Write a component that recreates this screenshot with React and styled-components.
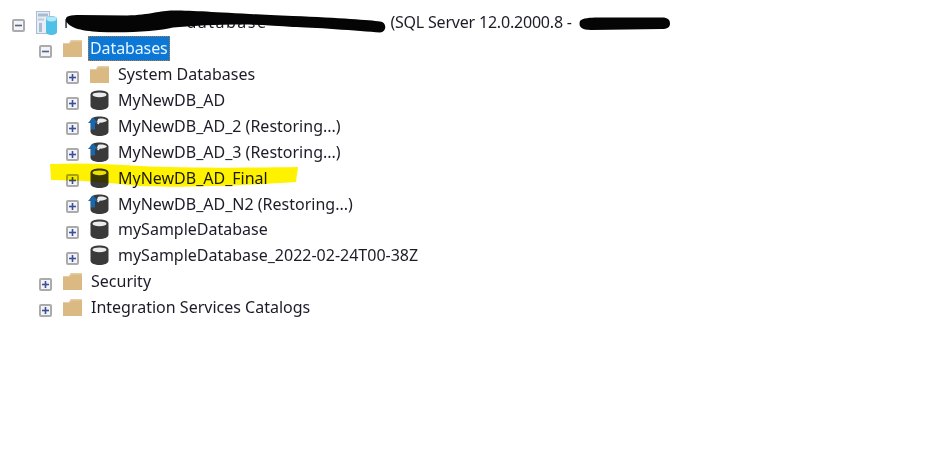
import React from "react";
import styled, { createGlobalStyle } from "styled-components";

const Global = createGlobalStyle`
  html, body { margin: 0; padding: 0; background: #fff; }
  body { width: 940px; height: 454px; overflow: hidden; }
`;

const Page = styled.div`
  width: 940px;
  height: 454px;
  box-sizing: border-box;
  padding-top: 9.4px;
  background: #fff;
  font-family: "Noto Sans", "Open Sans", sans-serif;
  font-size: 16px;
  color: #1c1c28;
  filter: blur(0.35px);
`;

const Tree = styled.div`
  display: flex;
  flex-direction: column;
`;

const Row = styled.div`
  position: relative;
  display: flex;
  align-items: center;
  height: 25.9px;
  padding-left: ${(p) => 12 + p.$depth * 27}px;
  white-space: nowrap;
`;

const ExpanderBox = styled.span`
  position: relative;
  flex: none;
  box-sizing: border-box;
  width: 13px;
  height: 13px;
  margin-top: 6px;
  border: 2px solid #ababab;
  border-radius: 2px;
  background: #f4f4f8;
  display: flex;
  align-items: center;
  justify-content: center;
`;

const IconSlot = styled.span`
  flex: none;
  width: 28px;
  margin-left: 11px;
  height: 24px;
  display: flex;
  align-items: center;
`;

const Label = styled.span`
  position: relative;
  line-height: 22px;
`;

const RootLabel = styled(Label)`
  letter-spacing: -0.2px;
`;

const Selected = styled(Label)`
  margin-left: -3px;
  padding: 0 2px;
  height: 25px;
  line-height: 24px;
  letter-spacing: -0.1px;
  background: #0b78d8;
  color: #eaf4ff;
  outline: 1.5px dotted #c9782a;
  outline-offset: -1px;
`;

const Redacted = styled.span`
  position: relative;
  display: inline-block;
  width: ${(p) => p.$w}px;
  height: 22px;
  vertical-align: top;
`;

const ResidualText = styled.span`
  position: absolute;
  left: 116px;
  top: 0;
  letter-spacing: 1.5px;
`;

const Stroke = styled.svg`
  position: absolute;
  overflow: visible;
`;

const RedactStroke = styled(Stroke)`
  left: 0;
  top: 0;
`;

const Highlight = styled(Stroke)`
  left: 50px;
  top: -1.5px;
  mix-blend-mode: multiply;
`;

const Expander = ({ open }) => (
  <ExpanderBox>
    <svg width="7" height="7" viewBox="0 0 7 7">
      <rect x="0" y="2.7" width="7" height="1.6" fill={open ? "#55617f" : "#3a4f9c"} />
      {!open && <rect x="2.7" y="0" width="1.6" height="7" fill="#3a4f9c" />}
    </svg>
  </ExpanderBox>
);

const FolderIcon = () => (
  <svg width="20" height="17" viewBox="0 0 20 17">
    <path d="M0 3 L0 17 L19 17 L19 0 L8 0 L6 3 Z" fill="#dab983" />
    <path d="M0 3 L6 3 L8 0 L19 0 L19 1.5 L8.6 1.5 L6.6 4 L0 4 Z" fill="#e6cda3" />
  </svg>
);

const DbIcon = () => (
  <svg width="19" height="20" viewBox="0 0 19 20">
    <path d="M0.5 4.5 C0.5 -1 18.5 -1 18.5 4.5 L18.5 15.5 C18.5 21.5 0.5 21.5 0.5 15.5 Z" fill="#3a3a3a" />
    <ellipse cx="9.5" cy="4.8" rx="7" ry="2.4" fill="#ececec" />
  </svg>
);

const RestoringIcon = () => (
  <svg width="21" height="20" viewBox="0 0 21 20" style={{ marginLeft: -2 }}>
    <path d="M2.5 4.5 C2.5 -1 20.5 -1 20.5 4.5 L20.5 15.5 C20.5 21.5 2.5 21.5 2.5 15.5 Z" fill="#3a3a3a" />
    <path d="M10 3 C13 2.2 17 2.6 19 4.6 C17.5 6.2 14 6.8 12 6.6 L10.5 8.5 L8.6 7 Z" fill="#ececec" />
    <path d="M5 1.5 L0 7 L3 7 L3 13.5 L7 13.5 L7 7 L10 7 Z" fill="#1567ae" />
  </svg>
);

const ServerIcon = () => (
  <svg width="21" height="24" viewBox="0 0 21 24" style={{ marginTop: 2 }}>
    <rect x="0.5" y="0.5" width="13" height="22" fill="#e6edf4" stroke="#aebccd" />
    <rect x="2" y="2.5" width="10" height="3" fill="#a9bbd0" />
    <rect x="2" y="7.5" width="6" height="2" fill="#bccad9" />
    <rect x="3" y="12" width="3" height="9" fill="#a9bbd0" />
    <path d="M10 8 C10 4 21 4 21 8 L21 21 C21 25 10 25 10 21 Z" fill="#4fc1e8" />
    <ellipse cx="15.5" cy="8" rx="5" ry="2.4" fill="#b4e8f7" />
  </svg>
);

const icons = { folder: FolderIcon, db: DbIcon, restoring: RestoringIcon, server: ServerIcon };

const items = [
  { depth: 1, icon: "folder", text: "Databases", open: true, selected: true },
  { depth: 2, icon: "folder", text: "System Databases" },
  { depth: 2, icon: "db", text: "MyNewDB_AD" },
  { depth: 2, icon: "restoring", text: "MyNewDB_AD_2 (Restoring...)" },
  { depth: 2, icon: "restoring", text: "MyNewDB_AD_3 (Restoring...)" },
  { depth: 2, icon: "db", text: "MyNewDB_AD_Final", marked: true },
  { depth: 2, icon: "restoring", text: "MyNewDB_AD_N2 (Restoring...)" },
  { depth: 2, icon: "db", text: "mySampleDatabase" },
  { depth: 2, icon: "db", text: "mySampleDatabase_2022-02-24T00-38Z" },
  { depth: 1, icon: "folder", text: "Security" },
  { depth: 1, icon: "folder", text: "Integration Services Catalogs" },
];

const TreeRow = ({ depth, icon, text, open, selected, marked }) => {
  const Icon = icons[icon];
  const Text = selected ? Selected : Label;
  return (
    <Row $depth={depth}>
      <Expander open={open} />
      <IconSlot>
        <Icon />
      </IconSlot>
      <Text>{text}</Text>
      {marked && (
        <Highlight width="248" height="25" viewBox="0 0 248 25">
          <path
            d="M0 1 C30 -0.5 60 1 90 3 C130 5 200 5 248 4 L246 19 C200 22 130 25 90 23 C60 20 30 17 1 17 Z"
            fill="#fff200"
          />
        </Highlight>
      )}
    </Row>
  );
};

export default function App() {
  return (
    <Page>
      <Global />
      <Tree>
        <Row $depth={0}>
          <Expander open />
          <IconSlot>
            <ServerIcon />
          </IconSlot>
          <RootLabel>
            r
            <Redacted $w={316}>
              <ResidualText>database</ResidualText>
              <RedactStroke width="316" height="22" viewBox="0 0 316 22">
                <path
                  d="M-4 8 C-4 5 0 4 10 4 L57 4.5 C80 4 90 -0.5 103 -0.5 C130 -0.5 150 2 223 5 C270 7 300 9 310 10.5 C317 11 317 21 310 21.5 C290 20 240 16 223 16 C190 13 150 12 103 16.5 C90 20 60 22 30 21 C10 20 -4 16 -4 8 Z"
                  fill="#050505"
                />
              </RedactStroke>
            </Redacted>
            {" "}(SQL Server 12.0.2000.8 -{" "}
            <Redacted $w={93}>
              <RedactStroke width="93" height="22" viewBox="0 0 93 22">
                <path
                  d="M4 10 C6 7 15 6.5 21 6.5 L86 6.5 C92 6.5 94 9 94 12.5 C94 16.5 91 18 86 18 L15 19 C6 19 2 16 4 10 Z"
                  fill="#050505"
                />
              </RedactStroke>
            </Redacted>
          </RootLabel>
        </Row>
        {items.map((item) => (
          <TreeRow key={item.text} {...item} />
        ))}
      </Tree>
    </Page>
  );
}
